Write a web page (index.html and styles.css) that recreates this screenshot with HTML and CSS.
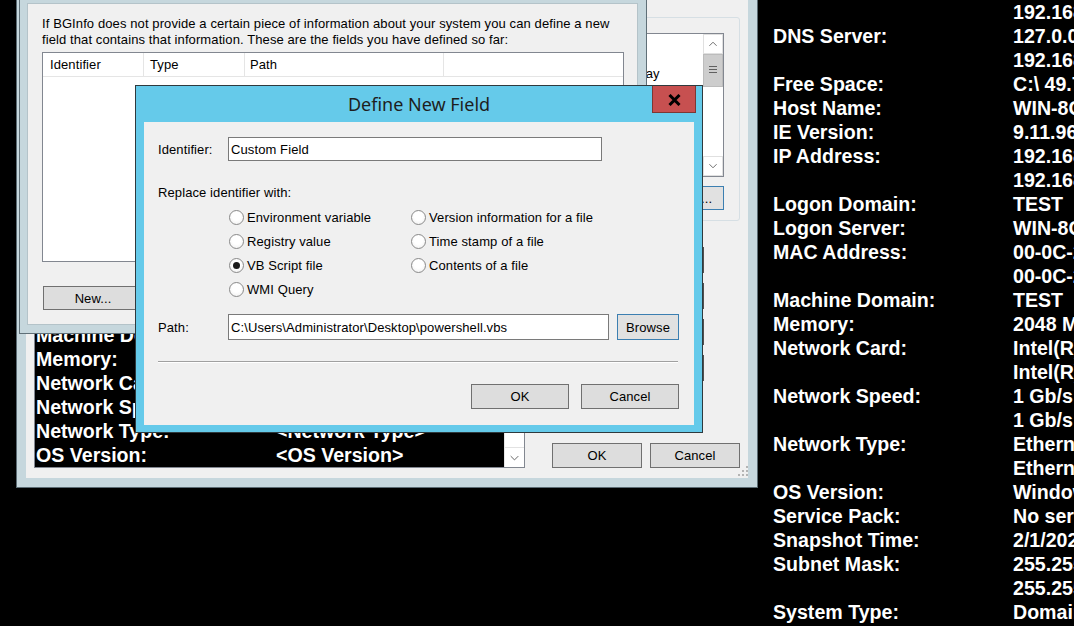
FILE: index.html
```html
<!DOCTYPE html>
<html>
<head>
<meta charset="utf-8">
<title>BGInfo - Define New Field</title>
<link rel="stylesheet" href="styles.css">
</head>
<body>
<div class="desktop">

  <div class="wall">
    <span></span><span>192.168.10.1</span>
    <span>DNS Server:</span><span>127.0.0.1</span>
    <span></span><span>192.168.10.10</span>
    <span>Free Space:</span><span>C:\ 49.72 GB NTFS</span>
    <span>Host Name:</span><span>WIN-8CQ3RDLL2VN</span>
    <span>IE Version:</span><span>9.11.9600.18838</span>
    <span>IP Address:</span><span>192.168.10.20</span>
    <span></span><span>192.168.1.20</span>
    <span>Logon Domain:</span><span>TEST</span>
    <span>Logon Server:</span><span>WIN-8CQ3RDLL2VN</span>
    <span>MAC Address:</span><span>00-0C-29-4A-1B-2C</span>
    <span></span><span>00-0C-29-4A-1B-36</span>
    <span>Machine Domain:</span><span>TEST</span>
    <span>Memory:</span><span>2048 MB</span>
    <span>Network Card:</span><span>Intel(R) 82574L Gigabit Network Connection</span>
    <span></span><span>Intel(R) 82574L Gigabit Network Connection #2</span>
    <span>Network Speed:</span><span>1 Gb/s</span>
    <span></span><span>1 Gb/s</span>
    <span>Network Type:</span><span>Ethernet</span>
    <span></span><span>Ethernet</span>
    <span>OS Version:</span><span>Windows Server 2012 R2 Standard</span>
    <span>Service Pack:</span><span>No service pack</span>
    <span>Snapshot Time:</span><span>2/1/2021 10:15 AM</span>
    <span>Subnet Mask:</span><span>255.255.255.0</span>
    <span></span><span>255.255.255.0</span>
    <span>System Type:</span><span>Domain Controller</span>
  </div>

  <!-- BGInfo main window -->
  <div class="win main-win">
    <div class="main-client">
      <div class="preview">
        <div class="preview-text">
          <div class="pv-row"><span>Machine Domain:</span><span>&lt;Machine Domain&gt;</span></div>
          <div class="pv-row"><span>Memory:</span><span>&lt;Memory&gt;</span></div>
          <div class="pv-row"><span>Network Card:</span><span>&lt;Network Card&gt;</span></div>
          <div class="pv-row"><span>Network Speed:</span><span>&lt;Network Speed&gt;</span></div>
          <div class="pv-row"><span>Network Type:</span><span>&lt;Network Type&gt;</span></div>
          <div class="pv-row"><span>OS Version:</span><span>&lt;OS Version&gt;</span></div>
        </div>
        <div class="pv-scroll">
          <div class="sb-btn sb-down">
            <svg width="20" height="20" viewBox="0 0 20 20"><polyline points="6,8 10,12 14,8" fill="none" stroke="#606060" stroke-width="1"/></svg>
          </div>
        </div>
      </div>

      <div class="side">
        <div class="groupbox">
          <div class="fieldlist">
            <div class="fl-items">
              <div>Boot Time</div>
              <div>CPU</div>
              <div>Default Gateway</div>
            </div>
            <div class="fl-scroll">
              <div class="sb-btn sb-up">
                <svg width="20" height="20" viewBox="0 0 20 20"><polyline points="6,12 10,8 14,12" fill="none" stroke="#606060" stroke-width="1"/></svg>
              </div>
              <div class="sb-thumb">
                <svg width="20" height="32" viewBox="0 0 20 32"><path d="M6 12.5h8M6 15.5h8M6 18.5h8" stroke="#606060" stroke-width="1"/></svg>
              </div>
              <div class="sb-track"></div>
              <div class="sb-btn sb-down2">
                <svg width="20" height="20" viewBox="0 0 20 20"><polyline points="6,8 10,12 14,8" fill="none" stroke="#606060" stroke-width="1"/></svg>
              </div>
            </div>
          </div>
          <button class="btn btn-default custom-btn">Custom...</button>
        </div>
        <div class="side-btns">
          <span class="btn side-btn"></span>
          <span class="btn side-btn"></span>
          <span class="btn side-btn"></span>
          <span class="btn side-btn"></span>
        </div>
        <span class="btn apply-btn"></span>
        <div class="ok-row">
          <button class="btn ok-btn">OK</button>
          <button class="btn ok-btn">Cancel</button>
        </div>
      </div>

      <svg class="grip" width="12" height="12" viewBox="0 0 12 12">
        <g fill="#b4b4b4">
          <rect x="9" y="1" width="2" height="2"/>
          <rect x="9" y="5" width="2" height="2"/><rect x="5" y="5" width="2" height="2"/>
          <rect x="9" y="9" width="2" height="2"/><rect x="5" y="9" width="2" height="2"/><rect x="1" y="9" width="2" height="2"/>
        </g>
      </svg>
    </div>
  </div>

  <!-- User Defined Fields dialog -->
  <div class="win udf-win">
    <div class="udf-client">
      <p class="udf-intro">If BGInfo does not provide a certain piece of information about your system you can define a new<br>field that contains that information. These are the fields you have defined so far:</p>
      <div class="udf-list">
        <div class="udf-head">
          <div class="hcell h1">Identifier</div>
          <div class="hcell h2">Type</div>
          <div class="hcell h3">Path</div>
        </div>
      </div>
      <div class="udf-buttons">
        <button class="btn udf-btn">New...</button>
      </div>
    </div>
  </div>

  <!-- Define New Field dialog -->
  <div class="win dnf-win">
    <div class="dnf-title">
      <span class="dnf-title-text">Define New Field</span>
      <button class="close-btn" aria-label="Close">
        <svg width="13" height="12" viewBox="0 0 13 12"><path d="M1.5 1L11.5 11M11.5 1L1.5 11" stroke="#000" stroke-width="3"/></svg>
      </button>
    </div>
    <div class="dnf-client">
      <div class="field-row">
        <span class="f-label">Identifier:</span>
        <div class="input id-input">Custom Field</div>
      </div>
      <div class="replace-label">Replace identifier with:</div>
      <div class="radio-grid">
        <div class="radio"><span class="rb"></span><span>Environment variable</span></div>
        <div class="radio"><span class="rb"></span><span>Registry value</span></div>
        <div class="radio"><span class="rb rb-on"></span><span>VB Script file</span></div>
        <div class="radio"><span class="rb"></span><span>WMI Query</span></div>
        <div class="radio"><span class="rb"></span><span>Version information for a file</span></div>
        <div class="radio"><span class="rb"></span><span>Time stamp of a file</span></div>
        <div class="radio"><span class="rb"></span><span>Contents of a file</span></div>
      </div>
      <div class="field-row path-row">
        <span class="f-label">Path:</span>
        <div class="input path-input">C:\Users\Administrator\Desktop\powershell.vbs</div>
        <button class="btn btn-default browse-btn">Browse</button>
      </div>
      <div class="sep"></div>
      <div class="dnf-buttons">
        <button class="btn dlg-btn">OK</button>
        <button class="btn dlg-btn">Cancel</button>
      </div>
    </div>
  </div>

</div>
</body>
</html>
```

FILE: styles.css
```css
* { box-sizing: border-box; }

html, body {
  margin: 0;
  padding: 0;
  background: #000;
}

.desktop {
  position: relative;
  width: 1074px;
  height: 626px;
  overflow: hidden;
  background: #000;
  font-family: "Liberation Sans", Arial, sans-serif;
  font-size: 13px;
  letter-spacing: 0.1px;
  color: #000;
}

/* ---------- BGInfo wallpaper text ---------- */
.wall {
  position: absolute;
  left: 773px;
  top: 0;
  width: 301px;
  display: grid;
  grid-template-columns: 240px 1fr;
  grid-auto-rows: 24px;
  font: bold 19.6px/24px "Liberation Sans", Arial, sans-serif;
  letter-spacing: 0;
  color: #fff;
  white-space: nowrap;
  overflow: hidden;
}

/* ---------- generic windows ---------- */
.win {
  position: absolute;
}

.btn {
  font: inherit;
  letter-spacing: inherit;
  color: #000;
  background: #e1e1e1;
  border: 1px solid #adadad;
  border-radius: 0;
  padding: 0;
  margin: 0;
  display: flex;
  align-items: center;
  justify-content: center;
  white-space: nowrap;
}

.btn-default {
  border-color: #3c7fb1;
}

/* ---------- main BGInfo window ---------- */
.main-win {
  left: 16px;
  top: 0;
  width: 742px;
  height: 488px;
  border: 1px solid #5b6b73;
  border-top: 0;
  background: #c6d7dd;
  padding: 0 9px 9px 9px;
}

.main-client {
  position: relative;
  height: 100%;
  background: #f0f0f0;
  display: flex;
  gap: 27px;
  padding: 17px 8px 10px 8px;
}

.preview {
  width: 491px;
  display: flex;
  border: 1px solid #828790;
}

.preview-text {
  flex: 1;
  background: #000;
  display: flex;
  flex-direction: column;
  justify-content: flex-end;
  padding-left: 1px;
  overflow: hidden;
  font: bold 19.6px/24px "Liberation Sans", Arial, sans-serif;
  letter-spacing: 0;
  color: #fff;
  white-space: nowrap;
}

.pv-row {
  display: grid;
  grid-template-columns: 240px 1fr;
  height: 24px;
}

.pv-scroll {
  width: 20px;
  background: #fff;
  border-left: 1px solid #e6e6e6;
  display: flex;
  flex-direction: column;
  justify-content: flex-end;
}

.sb-btn {
  height: 20px;
  display: flex;
  align-items: center;
  justify-content: center;
  background: #fff;
}

.sb-btn svg { display: block; }

.sb-down {
  border-top: 1px solid #e2e2e2;
}

.side {
  width: 188px;
  display: flex;
  flex-direction: column;
}

.groupbox {
  height: 204px;
  border: 1px solid #d6dfe4;
  border-radius: 3px;
  padding: 15px 15px 0 6px;
  display: flex;
  flex-direction: column;
  align-items: flex-end;
}

.fieldlist {
  width: 166px;
  height: 144px;
  border: 1px solid #828790;
  background: #fff;
  display: flex;
}

.fl-items {
  flex: 1;
  padding: 0 3px;
  line-height: 16px;
  white-space: nowrap;
  overflow: hidden;
}

.fl-scroll {
  width: 20px;
  display: flex;
  flex-direction: column;
  background: #fff;
}

.sb-up {
  border: 1px solid #e0e0e0;
}

.sb-thumb {
  height: 33px;
  background: #cdcdcd;
  border: 1px solid #bcbcbc;
}

.sb-thumb svg { display: block; margin: -1px; }

.sb-track {
  flex: 1;
  background: #fff;
}

.sb-down2 {
  border: 1px solid #e0e0e0;
}

.custom-btn {
  margin-top: 9px;
  width: 80px;
  height: 24px;
}

.side-btns {
  margin-top: 26px;
  display: flex;
  flex-direction: column;
  gap: 10px;
}

.side-btn {
  width: 152px;
  height: 26px;
  border-color: #505050;
}

.apply-btn {
  margin-top: 27px;
  width: 90px;
  height: 25px;
  border-color: #505050;
}

.ok-row {
  margin-top: 10px;
  display: flex;
  gap: 8px;
}

.ok-btn {
  width: 90px;
  height: 25px;
  border-color: #707070;
  background: #dddddd;
}

.grip {
  position: absolute;
  right: -1px;
  bottom: 1px;
}

/* ---------- User Defined Fields dialog ---------- */
.udf-win {
  left: 19px;
  top: 0;
  width: 628px;
  height: 334px;
  border: 1px solid #5f6f77;
  border-top: 0;
  background: #c6d7dd;
  padding: 3px 8px 8px 7px;
}

.udf-client {
  height: 100%;
  background: #f0f0f0;
  padding: 13px 14px 0 15px;
  box-shadow: inset 0 0 0 1px #b4c3c9;
}

.udf-intro {
  margin: 0;
  line-height: 16px;
  white-space: nowrap;
}

.udf-list {
  margin-top: 4px;
  height: 210px;
  border: 1px solid #828790;
  background: #fff;
}

.udf-head {
  display: flex;
  height: 24px;
  border-bottom: 1px solid #e5e5e5;
}

.hcell {
  display: flex;
  align-items: center;
  border-right: 1px solid #e5e5e5;
  padding-left: 6px;
}

.h1 { width: 101px; padding-left: 7px; }
.h2 { width: 101px; }
.h3 { width: 199px; padding-left: 5px; }

.udf-buttons {
  margin-top: 24px;
  margin-left: 1px;
  display: flex;
  gap: 8px;
}

.udf-btn {
  width: 100px;
  height: 24px;
  border-color: #707070;
  background: #dddddd;
}

/* ---------- Define New Field dialog ---------- */
.dnf-win {
  left: 135px;
  top: 85px;
  width: 568px;
  height: 348px;
  border: 1px solid #2f3a3e;
  background: #65caea;
  padding: 0 8px 7px 8px;
  display: flex;
  flex-direction: column;
}

.dnf-title {
  height: 36px;
  flex: none;
  display: grid;
  grid-template-columns: 1fr auto 1fr;
}

.dnf-title-text {
  grid-column: 2;
  font: 18px/36px "Noto Sans", "Liberation Sans", sans-serif;
  letter-spacing: 0;
  color: #1e1e1e;
  white-space: nowrap;
}

.close-btn {
  grid-column: 3;
  justify-self: end;
  align-self: start;
  width: 44px;
  height: 27px;
  margin-right: -2px;
  padding: 0;
  background: #c75050;
  border: 1px solid #7d3733;
  border-top: 0;
  display: flex;
  align-items: center;
  justify-content: center;
}

.close-btn svg { display: block; margin-top: 1px; }

.dnf-client {
  flex: 1;
  background: #f0f0f0;
  padding: 15px 15px 16px 14px;
  display: flex;
  flex-direction: column;
}

.field-row {
  display: flex;
  align-items: center;
}

.f-label {
  width: 70px;
}

.input {
  background: #fff;
  border: 1px solid #7a7a7a;
  padding: 0 2px;
  display: flex;
  align-items: center;
  white-space: nowrap;
}

.id-input {
  width: 374px;
  height: 24px;
}

.replace-label {
  margin-top: 24px;
  line-height: 16px;
}

.radio-grid {
  margin-top: 4px;
  margin-left: 70px;
  display: grid;
  grid-template-columns: 182px auto;
  grid-template-rows: repeat(4, 24px);
  grid-auto-flow: column;
}

.radio {
  display: flex;
  align-items: center;
  gap: 3px;
  padding-left: 1px;
  white-space: nowrap;
}

.rb {
  width: 15px;
  height: 15px;
  border-radius: 50%;
  border: 1px solid #8a8a8a;
  background: radial-gradient(circle at 50% 40%, #ffffff 40%, #ececec 100%);
  display: flex;
  align-items: center;
  justify-content: center;
}

.rb-on::after {
  content: "";
  width: 7px;
  height: 7px;
  border-radius: 50%;
  background: #1a1a1a;
}

.path-row {
  margin-top: 13px;
}

.path-input {
  width: 381px;
  height: 26px;
}

.browse-btn {
  margin-left: 8px;
  width: 62px;
  height: 26px;
  background: #e1e1e1;
}

.sep {
  margin-top: 21px;
  margin-right: 1px;
  height: 1px;
  background: #a0a0a0;
  box-shadow: 0 1px 0 #ffffff;
}

.dnf-buttons {
  margin-top: 22px;
  display: flex;
  justify-content: flex-end;
  gap: 12px;
}

.dlg-btn {
  width: 98px;
  height: 25px;
  border-color: #707070;
  background: #dddddd;
}
```
